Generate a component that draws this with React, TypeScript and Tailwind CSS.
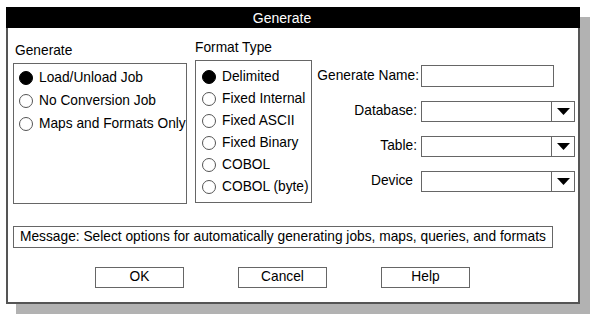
import React from 'react';

const FONT = { fontFamily: '"Liberation Sans", Arial, sans-serif' };

const Radio = ({ checked, label }: { checked?: boolean; label: string }) => (
  <div className="flex items-center h-[22px]">
    <span
      className={
        checked
          ? 'w-[14px] h-[14px] rounded-full bg-black border border-black shrink-0'
          : 'w-[14px] h-[14px] rounded-full bg-white border border-[#555] shrink-0'
      }
    />
    <span className="ml-[6px] whitespace-nowrap">{label}</span>
  </div>
);

const Arrow = () => (
  <svg width="13" height="7" viewBox="0 0 13 7">
    <polygon points="0,0 13,0 6.5,7" fill="#000" />
  </svg>
);

const Select = () => (
  <div className="flex w-[154px] h-[21px] border border-[#666] bg-white">
    <div className="flex-1" />
    <div className="w-[23px] border-l border-[#666] flex items-center justify-center">
      <Arrow />
    </div>
  </div>
);

const Button = ({ label }: { label: string }) => (
  <div className="w-[89px] h-[21px] border border-[#666] flex items-center justify-center">{label}</div>
);

export default function App() {
  return (
    <div className="w-[599px] h-[322px] bg-white pl-[6px] pt-[7px] text-[13.75px] text-black" style={FONT}>
      <div className="w-[574px] h-[297px] flex flex-col bg-white shadow-[10px_10px_0_#b2b2b2]">
        {/* title bar */}
        <div className="h-[21px] bg-black text-white text-[14px] flex items-center justify-center pr-[22px] leading-none">
          Generate
        </div>

        <div className="flex-1 flex flex-col border-x-2 border-b-2 border-[#555]">
          <div className="flex h-[176px] pl-[5px]">
            {/* Generate group */}
            <div className="flex flex-col pt-[15px] w-[174px]">
              <div className="pl-[2px] leading-[16px] h-[16px]">Generate</div>
              <div className="mt-[4px] h-[142px] border border-[#666] pl-[5px] pt-[3px]">
                <div className="flex flex-col gap-[1px]">
                  <Radio checked label="Load/Unload Job" />
                  <Radio label="No Conversion Job" />
                  <Radio label="Maps and Formats Only" />
                </div>
              </div>
            </div>

            {/* Format Type group */}
            <div className="flex flex-col pt-[12px] w-[117px] ml-[8px]">
              <div className="leading-[16px] h-[16px]">Format Type</div>
              <div className="mt-[4px] h-[143px] border border-[#666] pl-[6px] pt-[5px]">
                <Radio checked label="Delimited" />
                <Radio label="Fixed Internal" />
                <Radio label="Fixed ASCII" />
                <Radio label="Fixed Binary" />
                <Radio label="COBOL" />
                <Radio label="COBOL (byte)" />
              </div>
            </div>

            {/* Fields */}
            <div className="flex flex-col pt-[37px] ml-[4px]">
              <div className="flex items-center h-[22px]">
                <div className="w-[105px] text-right pr-[2px] whitespace-nowrap">Generate Name:</div>
                <div className="w-[133px] h-[22px] border border-[#666] bg-white" />
              </div>
              <div className="flex items-center h-[21px] mt-[14px]">
                <div className="w-[105px] text-right pr-[4px]">Database:</div>
                <Select />
              </div>
              <div className="flex items-center h-[21px] mt-[14px]">
                <div className="w-[105px] text-right pr-[4px]">Table:</div>
                <Select />
              </div>
              <div className="flex items-center h-[21px] mt-[14px]">
                <div className="w-[105px] text-right pr-[8px]">Device</div>
                <Select />
              </div>
            </div>
          </div>

          {/* Message */}
          <div className="ml-[5px] mt-[22px] w-[540px] h-[22px] border border-[#666] flex items-center pl-[6px] whitespace-nowrap">
            Message: Select options for automatically generating jobs, maps, queries, and formats
          </div>

          {/* Buttons */}
          <div className="flex mt-[19px] pl-[87px] gap-[54px]">
            <Button label="OK" />
            <Button label="Cancel" />
            <Button label="Help" />
          </div>
        </div>
      </div>
    </div>
  );
}
